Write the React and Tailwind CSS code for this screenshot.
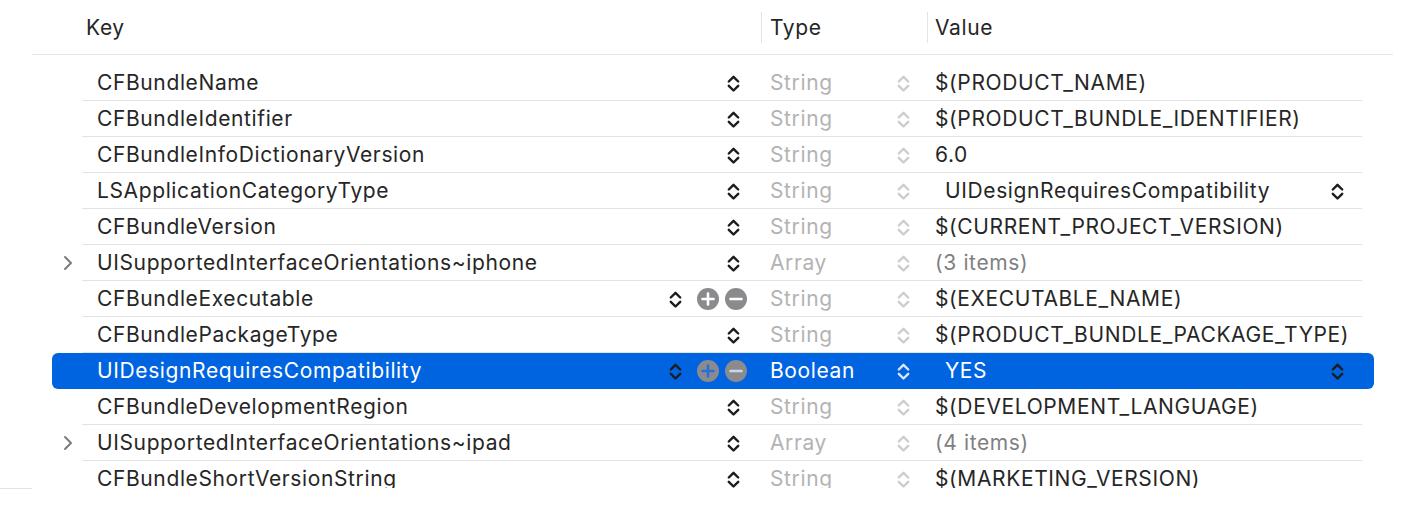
import React from "react";

const rows = [
  { key: "CFBundleName", type: "String", value: "$(PRODUCT_NAME)" },
  { key: "CFBundleIdentifier", type: "String", value: "$(PRODUCT_BUNDLE_IDENTIFIER)" },
  { key: "CFBundleInfoDictionaryVersion", type: "String", value: "6.0" },
  { key: "LSApplicationCategoryType", type: "String", value: "UIDesignRequiresCompatibility", popup: true },
  { key: "CFBundleVersion", type: "String", value: "$(CURRENT_PROJECT_VERSION)" },
  { key: "UISupportedInterfaceOrientations~iphone", type: "Array", value: "(3 items)", expand: true, muted: true },
  { key: "CFBundleExecutable", type: "String", value: "$(EXECUTABLE_NAME)", hover: true },
  { key: "CFBundlePackageType", type: "String", value: "$(PRODUCT_BUNDLE_PACKAGE_TYPE)" },
  { key: "UIDesignRequiresCompatibility", type: "Boolean", value: "YES", popup: true, selected: true },
  { key: "CFBundleDevelopmentRegion", type: "String", value: "$(DEVELOPMENT_LANGUAGE)" },
  { key: "UISupportedInterfaceOrientations~ipad", type: "Array", value: "(4 items)", expand: true, muted: true },
  { key: "CFBundleShortVersionString", type: "String", value: "$(MARKETING_VERSION)" },
];

function Stepper({ color }) {
  return (
    <svg width="13" height="19" viewBox="0 0 13 19" className="shrink-0">
      <path d="M1.8 7.5 L6.5 2.8 L11.2 7.5" fill="none" stroke={color} strokeWidth="2.4" strokeLinecap="round" strokeLinejoin="round" />
      <path d="M1.8 11.8 L6.5 16.5 L11.2 11.8" fill="none" stroke={color} strokeWidth="2.4" strokeLinecap="round" strokeLinejoin="round" />
    </svg>
  );
}

function CircleBtn({ plus, glyph }) {
  return (
    <svg width="22" height="22" viewBox="0 0 22 22" className="shrink-0">
      <circle cx="11" cy="11" r="11" fill="#8b8b8e" />
      <path d="M5.5 11 H16.5" stroke={glyph} strokeWidth="2.6" strokeLinecap="round" />
      {plus && <path d="M11 5.5 V16.5" stroke={glyph} strokeWidth="2.6" strokeLinecap="round" />}
    </svg>
  );
}

function Disclosure() {
  return (
    <svg width="10" height="16" viewBox="0 0 10 16">
      <path d="M2 2 L8 8 L2 14" fill="none" stroke="#7c7c7c" strokeWidth="2" strokeLinecap="round" strokeLinejoin="round" />
    </svg>
  );
}

function Row({ r }) {
  const sel = r.selected;
  const showBtns = r.hover || r.selected;
  return (
    <div
      className={
        "flex h-[36px] w-[1322px] ml-[52px] items-stretch " +
        (sel ? "bg-[#0064e0] rounded-[6px]" : "")
      }
    >
      <div className="w-[30px] flex items-center justify-center pl-[2px]">
        {r.expand && <Disclosure />}
      </div>
      <div
        className={
          "w-[1280px] flex items-center pt-[1px] border-b " +
          (sel ? "border-transparent" : "border-[#e3e3e3]")
        }
      >
        {/* Key column */}
        <div className={"w-[679px] flex items-center " + (showBtns ? "pr-[14px]" : "pr-[21px]")}>
          <div className={"flex-1 pl-[15px] whitespace-nowrap " + (sel ? "text-white" : "text-[#262626]")}>{r.key}</div>
          <Stepper color="#1c1c1c" />
          {showBtns && (
            <div className="flex items-center gap-[6px] ml-[15px]">
              <CircleBtn plus glyph={sel ? "#2a6fd6" : "#ffffff"} />
              <CircleBtn glyph={sel ? "#c9d6ea" : "#ffffff"} />
            </div>
          )}
        </div>
        {/* Type column */}
        <div className="w-[166px] flex items-center pr-[17px]">
          <div className={"flex-1 pl-[9px] whitespace-nowrap " + (sel ? "text-white" : "text-[#b3b3b3]")}>{r.type}</div>
          <Stepper color={sel ? "#dbe7fb" : "#cdcdcd"} />
        </div>
        {/* Value column */}
        <div className="w-[435px] flex items-center pr-[18px]">
          <div
            className={
              "flex-1 whitespace-nowrap " +
              (r.popup ? "pl-[18px] " : "pl-[8px] ") +
              (sel ? "text-white" : r.muted ? "text-[#808080]" : "text-[#262626]")
            }
          >
            {r.value}
          </div>
          {r.popup && <Stepper color="#1c1c1c" />}
        </div>
      </div>
    </div>
  );
}

export default function App() {
  return (
    <div
      className="w-[1404px] h-[506px] bg-white overflow-hidden text-[21px] leading-[26px] tracking-[0.62px]"
      style={{ fontFamily: "Inter, 'Liberation Sans', sans-serif" }}
    >
      {/* Header */}
      <div className="h-[55px] ml-[32px] w-[1361px] border-b border-[#e3e3e3] flex items-center text-[#262626]">
        <div className="w-[729px] pl-[54px] pt-[2px]">Key</div>
        <div className="w-[166px] h-[31px] border-l border-[#e3e3e3] flex items-center pl-[8px] pt-[2px]">Type</div>
        <div className="flex-1 h-[31px] border-l border-[#e3e3e3] flex items-center pl-[7px] pt-[2px]">Value</div>
      </div>
      {/* Rows */}
      <div className="h-[433px] overflow-hidden pt-[10px]">
        {rows.map((r) => (
          <Row key={r.key} r={r} />
        ))}
      </div>
      <div className="w-[32px] border-t border-[#e3e3e3]" />
    </div>
  );
}
